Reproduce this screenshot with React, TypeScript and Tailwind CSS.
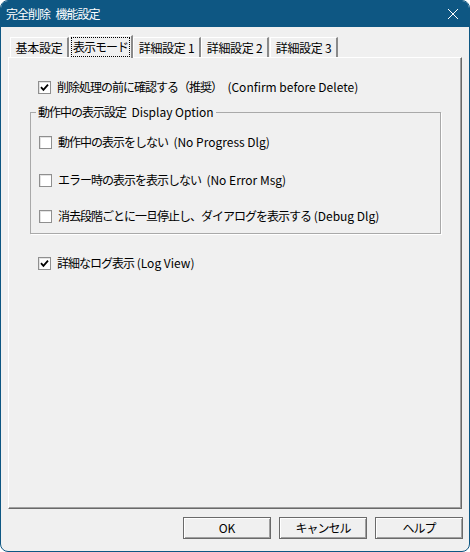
import React from "react";

const font = "font-['Noto_Sans_CJK_JP','Noto_Sans',sans-serif]";

// Meiryo UI draws kana/kanji narrower than Noto CJK, so tighten only those runs
function Jp({ text }: { text: string }) {
  const parts = text.match(/[\u3000-\u30ff\u4e00-\u9fff\uff00-\uffef]+|[^\u3000-\u30ff\u4e00-\u9fff\uff00-\uffef]+/g) ?? [];
  return (
    <>
      {parts.map((p, i) =>
        /[\u3000-\u30ff\u4e00-\u9fff\uff00-\uffef]/.test(p) ? (
          <span key={i} className="tracking-[-1px]">
            {p}
          </span>
        ) : (
          <span key={i}>{p}</span>
        )
      )}
    </>
  );
}

function Check({ checked }: { checked?: boolean }) {
  return (
    <span className="flex h-[13px] w-[13px] shrink-0 items-center justify-center border border-[#8f8f8f] bg-white shadow-[inset_1px_1px_0_#e3e3e3]">
      {checked ? (
        <svg width="9" height="9" viewBox="0 0 9 9">
          <path d="M1 4.2 L3.4 6.8 L8 1.6" stroke="#000" strokeWidth="1.8" fill="none" />
        </svg>
      ) : null}
    </span>
  );
}

function Row({ label, checked }: { label: string; checked?: boolean }) {
  return (
    <div className="flex h-[20px] items-center gap-[6px] pl-[8px]">
      <Check checked={checked} />
      <span className="whitespace-pre text-[12px] leading-none text-black">
        <Jp text={label} />
      </span>
    </div>
  );
}

const tabs = [
  { label: "基本設定", w: "w-[59px]", ml: "ml-[2px]" },
  { label: "表示モード", w: "w-[64px]", ml: "ml-0", active: true },
  { label: "詳細設定 1", w: "w-[68px]", ml: "ml-0" },
  { label: "詳細設定 2", w: "w-[68px]", ml: "ml-0" },
  { label: "詳細設定 3", w: "w-[68px]", ml: "ml-[1px]" },
];

export default function App() {
  return (
    <div className={`${font} h-[552px] w-[470px] bg-white`}>
      <div className="flex h-[552px] w-[470px] flex-col overflow-hidden rounded-[8px] border border-[#0e5783] bg-[#f0f0f0]">
        <div className="flex h-[26px] shrink-0 items-center justify-between bg-[#0e5783] pl-[5px] pr-[10px] text-white">
          <span className="whitespace-pre text-[12px] leading-none">
            <Jp text="完全削除  機能設定" />
          </span>
          <svg width="12" height="12" viewBox="0 0 12 12">
            <path d="M1 1 L11 11 M11 1 L1 11" stroke="#fff" strokeWidth="1" />
          </svg>
        </div>

        <div className="flex flex-1 flex-col px-[7px] pt-[8px]">
          <div className="flex h-[22px] items-end">
            {tabs.map((t) =>
              t.active ? (
                <div
                  key={t.label}
                  className={`${t.w} ${t.ml} relative z-10 -mb-px flex h-[23px] items-start justify-center border-l border-t border-r-2 border-l-white border-t-white border-r-[#8a8a8a] bg-[#f0f0f0] pt-[1px]`}
                >
                  <span className="whitespace-nowrap border border-dotted border-black px-[1px] py-[3px] text-[12px] leading-none text-black">
                    <Jp text={t.label} />
                  </span>
                </div>
              ) : (
                <div
                  key={t.label}
                  className={`${t.w} ${t.ml} flex h-[20px] items-center justify-center whitespace-pre border-l border-t border-r-2 border-l-white border-t-white border-r-[#8a8a8a] text-[12px] leading-none tracking-[-0.3px] text-black`}
                >
                  {t.label}
                </div>
              )
            )}
          </div>

          <div className="flex h-[452px] flex-col border border-l-white border-t-white border-r-[#696969] border-b-[#696969] pl-[21px] pr-[20px] pt-[19px] shadow-[inset_-1px_-1px_0_#a0a0a0]">
            <Row label="削除処理の前に確認する（推奨）  (Confirm before Delete)" checked />

            <fieldset className="mt-[7px] h-[130px] border border-[#a9a9a9] px-0 pb-[7px] shadow-[1px_1px_0_#fff]">
              <legend className="ml-[5px] whitespace-pre px-[2px] text-[12px] leading-[16px] text-black">
                <Jp text="動作中の表示設定  Display Option" />
              </legend>
              <div className="mt-[12px]">
                <Row label="動作中の表示をしない  (No Progress Dlg)" />
              </div>
              <div className="mt-[18px]">
                <Row label="エラー時の表示を表示しない  (No Error Msg)" />
              </div>
              <div className="mt-[16px]">
                <Row label="消去段階ごとに一旦停止し、ダイアログを表示する (Debug Dlg)" />
              </div>
            </fieldset>

            <div className="mt-[19px]">
              <Row label="詳細なログ表示 (Log View)" checked />
            </div>
          </div>

          <div className="-mr-[1px] mt-[8px] flex justify-end gap-[8px]">
            {["OK", "キャンセル", "ヘルプ"].map((b) => (
              <button
                key={b}
                type="button"
                className="flex h-[22px] w-[88px] items-center justify-center border border-[#6a6a6a] bg-[#f0f0f0] text-[12px] leading-none text-black shadow-[inset_1px_1px_0_#ffffff,inset_-1px_-1px_0_#a0a0a0]"
              >
                <Jp text={b} />
              </button>
            ))}
          </div>
        </div>
      </div>
    </div>
  );
}
